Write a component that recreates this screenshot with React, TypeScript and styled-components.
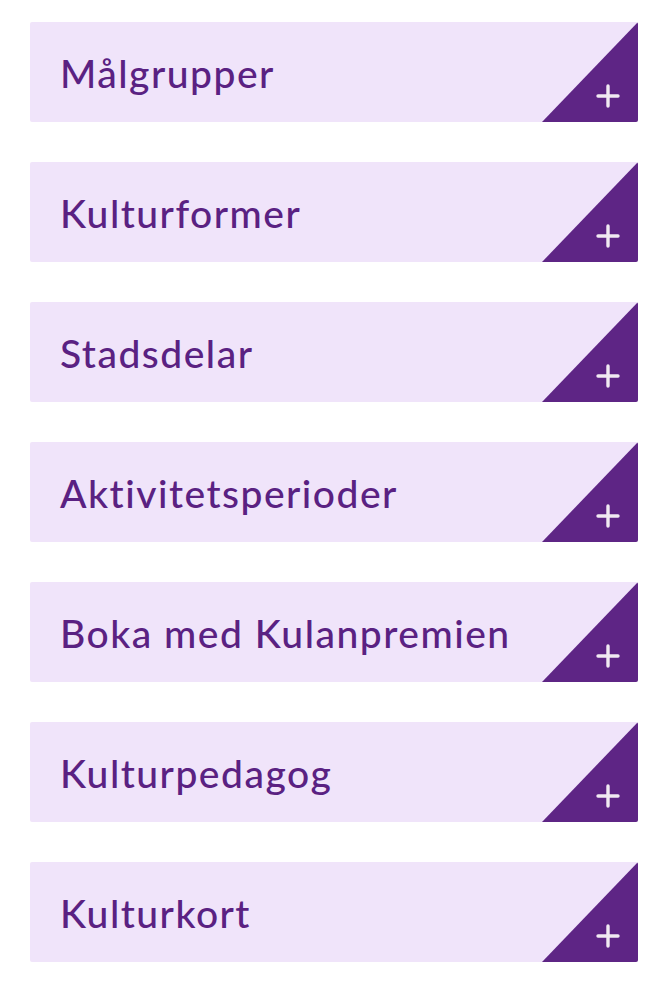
import React from "react";
import styled, { createGlobalStyle } from "styled-components";

const GlobalStyle = createGlobalStyle`
  body {
    margin: 0;
    background: #ffffff;
    font-family: Lato, "Noto Sans", sans-serif;
  }
`;

const List = styled.div`
  display: flex;
  flex-direction: column;
  gap: 40px;
  padding: 22px 26px 0 30px;
`;

const Item = styled.button`
  position: relative;
  display: flex;
  align-items: center;
  height: 100px;
  padding: 0 0 0 30px;
  border: none;
  border-radius: 2px;
  background: #f0e4fa;
  color: #5a2182;
  font-family: Lato, "Noto Sans", sans-serif;
  font-size: 39px;
  font-weight: 500;
  letter-spacing: 1.5px;
  text-align: left;
  overflow: hidden;
  cursor: pointer;
`;

const Label = styled.span`
  padding-top: 2px;
`;

const Corner = styled.svg`
  position: absolute;
  right: 0;
  bottom: 0;
`;

const categories = [
  "Målgrupper",
  "Kulturformer",
  "Stadsdelar",
  "Aktivitetsperioder",
  "Boka med Kulanpremien",
  "Kulturpedagog",
  "Kulturkort",
];

const PlusCorner: React.FC = () => (
  <Corner width="96" height="100" viewBox="0 0 96 100">
    <polygon points="96,0 96,100 0,100" fill="#5e2585" />
    <path d="M56 74 H76 M66 64 V84" stroke="#f1eaf2" strokeWidth="3.4" strokeLinecap="round" />
  </Corner>
);

export default function App() {
  return (
    <>
      <GlobalStyle />
      <List>
        {categories.map(c => (
          <Item key={c}>
            <Label>{c}</Label>
            <PlusCorner />
          </Item>
        ))}
      </List>
    </>
  );
}
